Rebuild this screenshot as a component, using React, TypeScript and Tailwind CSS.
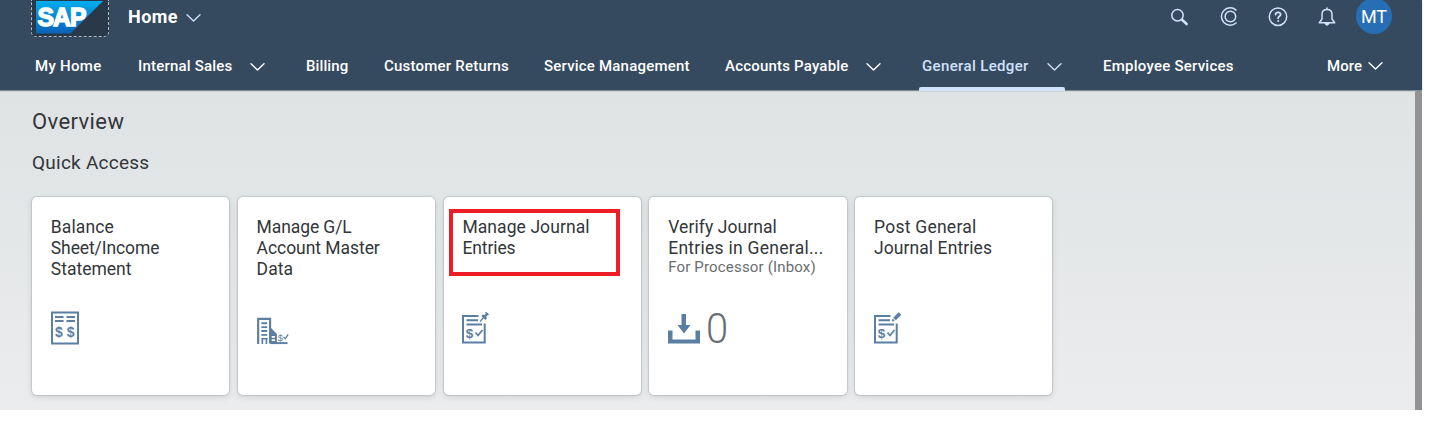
import React from "react";

function Chevron({ className = "" }: { className?: string }) {
  return (
    <svg className={"shrink-0 " + className} width="15" height="10" viewBox="0 0 15 10" fill="none" stroke="currentColor" strokeWidth="1.4" strokeLinecap="round" strokeLinejoin="round">
      <path d="M1 1.800 7.500 8 14 1.800" />
    </svg>
  );
}

function Logo() {
  return (
    <div className="ml-[31px] h-[37px] w-[78px] shrink-0 rounded-b-[5px] border border-t-0 border-dashed border-[#b4bcc5] bg-[#293949] pl-1">
      <svg width="68" height="35" viewBox="0 0 68 35">
        <defs>
          <linearGradient id="logo-blue" x1="0" y1="0" x2="0" y2="1">
            <stop offset="0" stopColor="#00aeef" />
            <stop offset="0.5" stopColor="#0a86d2" />
            <stop offset="1" stopColor="#0b62b8" />
          </linearGradient>
        </defs>
        <path d="M0 1H67L34.500 33.500H0Z" fill="url(#logo-blue)" />
        <text x="1.500" y="26.300" textLength="48" lengthAdjust="spacingAndGlyphs" fontFamily="Liberation Sans, sans-serif" fontWeight="700" fontSize="26" letterSpacing="-1" fill="#fff" stroke="#fff" strokeWidth="1.500">SAP</text>
      </svg>
    </div>
  );
}

type NavItem = { label: string; box: string; spacing: string; chevron?: string; active?: boolean };

const navItems: NavItem[] = [
  { label: "My Home", box: "w-[102px]", spacing: "tracking-[0.3px]" },
  { label: "Internal Sales", box: "w-[169px]", spacing: "tracking-[0.2px]", chevron: "w-[113px] pl-[1px]" },
  { label: "Billing", box: "w-[78px]", spacing: "tracking-[0.1px]" },
  { label: "Customer Returns", box: "w-[160px]", spacing: "tracking-[0.22px]" },
  { label: "Service Management", box: "w-[181px]", spacing: "tracking-[0.2px]" },
  { label: "Accounts Payable", box: "w-[197px]", spacing: "tracking-[0.2px]", chevron: "w-[141px]" },
  { label: "General Ledger", box: "w-[181px]", spacing: "tracking-[0.36px]", chevron: "w-[125px]", active: true },
  { label: "Employee Services", box: "w-[224px]", spacing: "tracking-[0.24px]" },
  { label: "More", box: "w-[60px]", spacing: "tracking-[0.1px]", chevron: "w-[41px]" },
];

function Header() {
  return (
    <header className="relative flex h-[90px] shrink-0 flex-col bg-[#354a5f] text-white shadow-[0_1px_1px_#7f8a94]">
      <div className="flex h-[42px] items-start">
        <Logo />
        <div className="ml-[19px] flex h-[33px] items-center text-[18px] font-bold">
          <span className="w-[58px] tracking-[0.45px]">Home</span>
          <Chevron className="mt-[3px] text-[#d1e0fb]" />
        </div>
        <div className="ml-auto flex h-[34px] items-center pr-[30px] text-[#d1e0fb]">
          <svg className="mr-[30px]" width="19" height="19" viewBox="0 0 19 19" fill="none" stroke="currentColor">
            <circle cx="7.500" cy="7.300" r="5.700" strokeWidth="1.500" />
            <path d="m12 11.800 4.700 4.200" strokeWidth="2.600" strokeLinecap="round" />
          </svg>
          <svg className="mr-[29px]" width="20" height="20" viewBox="0 0 20 20" fill="none" stroke="currentColor" strokeWidth="1.500" strokeLinecap="round">
            <path d="M17 3.100A8.700 8.700 0 1 0 17 16" />
            <circle cx="11.400" cy="9.500" r="5.300" />
          </svg>
          <svg className="mr-[30px]" width="20" height="20" viewBox="0 0 20 20" fill="none" stroke="currentColor" strokeLinecap="round">
            <circle cx="10" cy="9.700" r="8.700" strokeWidth="1.500" />
            <path d="M7.600 7.600C7.600 4.500 12.600 4.600 12.600 7.500C12.600 9.300 10.100 9.200 10.100 11.300" strokeWidth="1.800" />
            <circle cx="10.100" cy="14" r=".5" fill="currentColor" />
          </svg>
          <svg className="mr-[20px]" width="18" height="20" viewBox="0 0 18 20" fill="none" stroke="currentColor" strokeWidth="1.500" strokeLinejoin="round">
            <path d="M1.300 15.800 4 12V7.300C4 4 6 2.400 9 2.400S14 4 14 7.300V12L16.700 15.800Z" />
            <path d="M9 1V2.400" strokeLinecap="round" />
            <path d="M6.800 16.500H11.200Q9 20 6.800 16.500Z" fill="currentColor" strokeWidth="1" />
          </svg>
          <div className="mt-[-2px] flex size-[36px] items-center justify-center rounded-full bg-[#286eb4] text-[18px] text-white">MT</div>
        </div>
      </div>
      <nav className="flex h-[48px] pl-[35px] text-[15px] font-medium">
        {navItems.map((n) => (
          <div key={n.label} className={"flex shrink-0 flex-col whitespace-nowrap " + n.box + (n.active ? " text-[#d1e0fb]" : "")}>
            <div className="flex h-[45px] shrink-0 items-center pt-[3px]">
              <span className={n.spacing + " " + (n.chevron ?? "")}>{n.label}</span>
              {n.chevron && <Chevron className={n.label === "More" ? "" : "mt-[2px]"} />}
            </div>
            {n.active && <div className="-ml-[3px] h-[3.500px] w-[146px] shrink-0 rounded-t-[2px] bg-[#d1e0fb]" />}
          </div>
        ))}
      </nav>
    </header>
  );
}

function SheetIcon() {
  return (
    <svg width="28" height="34" viewBox="0 0 28 34" fill="none" stroke="#5b7ea3">
      <path d="M1 1.500H27V32.500H1Z" strokeWidth="2" />
      <path d="M4 6H12.500M4 10H12.500M15.500 6H24M15.500 10H24" strokeWidth="2" />
      <g fill="#5b7ea3" stroke="none" fontFamily="Liberation Sans, sans-serif" fontWeight="700" fontSize="14">
        <text x="4" y="26">$</text>
        <text x="15.800" y="26">$</text>
      </g>
    </svg>
  );
}

function BuildingIcon() {
  return (
    <svg width="32" height="28" viewBox="0 0 33 28" fill="none" stroke="#5b7ea3">
      <path d="M1.200 27.500V1.500H13.500V27" strokeWidth="2.200" />
      <path d="M4.500 6H10.500M4.500 10H10.500M4.500 14H10.500M4.500 18H10.500" strokeWidth="1.900" />
      <path d="M5.500 27.500V22.500M9.700 27.500V22.500M4.500 22H11" strokeWidth="1.700" />
      <path d="M14 10.500 20.500 17V27H14Z" fill="#5b7ea3" stroke="none" />
      <path d="M15.200 20H18.500M15.200 23.500H18.500" stroke="#fff" strokeWidth="1.800" />
      <path d="M14 26.500H31.500" strokeWidth="2" />
      <path d="m27.500 20 1.700 2 3-4.500" strokeWidth="1.300" />
      <text x="21.300" y="24" fill="#5b7ea3" stroke="none" fontFamily="Liberation Sans, sans-serif" fontSize="9.500">$</text>
    </svg>
  );
}

function JournalIcon({ pin = false }: { pin?: boolean }) {
  return (
    <svg width="28" height="34" viewBox="0 0 28 34" fill="none" stroke="#5b7ea3">
      <path d="M16.500 5H1V31.500H22.700V12.500" strokeWidth="2" />
      <path d="M4.500 9.300H16M4.500 13.500H20" strokeWidth="2" />
      <path d="m13.500 21.500 2.500 3 4.500-5.500" strokeWidth="1.700" />
      <text x="3.800" y="26.500" fill="#5b7ea3" stroke="none" fontFamily="Liberation Sans, sans-serif" fontWeight="700" fontSize="13.500">$</text>
      {pin ? (
        <g>
          <path d="m18 10.500 4-4.500" strokeWidth="1.200" />
          <path d="m20.200 4.200 4 3.800M22 6.300 25.500 2.500" strokeWidth="2.500" />
          <path d="m23.500 1.200 3 2.700" strokeWidth="1.500" />
        </g>
      ) : (
        <g>
          <path d="M20.500 8 26 2.500" strokeWidth="3.800" />
          <path d="m18.200 10.200.6-2.200 1.500 1.600Z" fill="#5b7ea3" strokeWidth=".7" />
        </g>
      )}
    </svg>
  );
}

function InboxIcon() {
  return (
    <svg width="32" height="30" viewBox="0 0 32 30" fill="#5b7ea3">
      <path d="M13.500 0H18V11H22.500L16 19.500 9.500 11H13.500Z" />
      <path d="M0 16.500H4.500V25.500H27.500V16.500H32V29.500H0Z" />
    </svg>
  );
}

type Line = { text: string; spacing: string };
type TileProps = { lines: Line[]; subtitle?: string; highlight?: boolean; children: React.ReactNode };

function Tile({ lines, subtitle, highlight, children }: TileProps) {
  return (
    <div className="relative flex h-[198px] w-[197.300px] shrink-0 flex-col rounded-[5px] bg-white pl-[18.800px] pt-[20px] shadow-[0_0_1px_1px_rgba(120,130,135,0.25),0_2px_6px_rgba(80,90,95,0.18)]">
      <div className="h-[94px] whitespace-nowrap text-[17.500px] leading-[21px] text-[#32363a]">
        {lines.map((l) => (
          <div key={l.text} className={l.spacing}>{l.text}</div>
        ))}
        {subtitle && <div className="text-[15px] leading-[17px] tracking-[0.17px] text-[#6a6d70]">{subtitle}</div>}
      </div>
      <div className="flex h-[38px] items-start">{children}</div>
      {highlight && <div className="absolute left-[5px] top-[12px] h-[67px] w-[171px] border-4 border-[#ee1c25]" />}
    </div>
  );
}

export default function App() {
  return (
    <div className="h-[424px] w-[1430px] overflow-hidden bg-white font-['Roboto',sans-serif]">
      <div className="flex h-[409.500px] w-[1422px] flex-col">
        <Header />
        <div className="flex min-h-0 flex-1 bg-linear-to-b from-[#dfe3e4] to-[#ebecee]">
          <main className="flex-1 pl-[32px] pt-[18px] text-[#32363a]">
            <h1 className="h-[28px] text-[22px] leading-[28px] tracking-[0.4px]">Overview</h1>
            <h2 className="mt-[13px] h-[28px] text-[19px] leading-[28px] tracking-[0.25px]">Quick Access</h2>
            <div className="mt-[20px] flex gap-[8.500px]">
              <Tile lines={[{ text: "Balance", spacing: "tracking-[0.1px]" }, { text: "Sheet/Income", spacing: "tracking-[-0.1px]" }, { text: "Statement", spacing: "tracking-[0px]" }]}>
                <SheetIcon />
              </Tile>
              <Tile lines={[{ text: "Manage G/L", spacing: "tracking-[-0.1px]" }, { text: "Account Master", spacing: "tracking-[-0.05px]" }, { text: "Data", spacing: "tracking-[0.1px]" }]}>
                <div className="pt-[6px]"><BuildingIcon /></div>
              </Tile>
              <Tile lines={[{ text: "Manage Journal", spacing: "tracking-[0.08px]" }, { text: "Entries", spacing: "tracking-[-0.1px]" }]} highlight>
                <JournalIcon pin />
              </Tile>
              <Tile lines={[{ text: "Verify Journal", spacing: "tracking-[0.08px]" }, { text: "Entries in General...", spacing: "tracking-[0.27px]" }]} subtitle="For Processor (Inbox)">
                <div className="pt-[3px]"><InboxIcon /></div>
                <span className="ml-[5.500px] inline-block origin-left scale-x-95 text-[42px] font-light leading-[35px] text-[#6a6d70]">0</span>
              </Tile>
              <Tile lines={[{ text: "Post General", spacing: "tracking-[0.25px]" }, { text: "Journal Entries", spacing: "tracking-[0.08px]" }]}>
                <JournalIcon />
              </Tile>
            </div>
          </main>
          <div className="w-[7px] rounded-t-[3px] bg-[#929292]" />
        </div>
      </div>
    </div>
  );
}
